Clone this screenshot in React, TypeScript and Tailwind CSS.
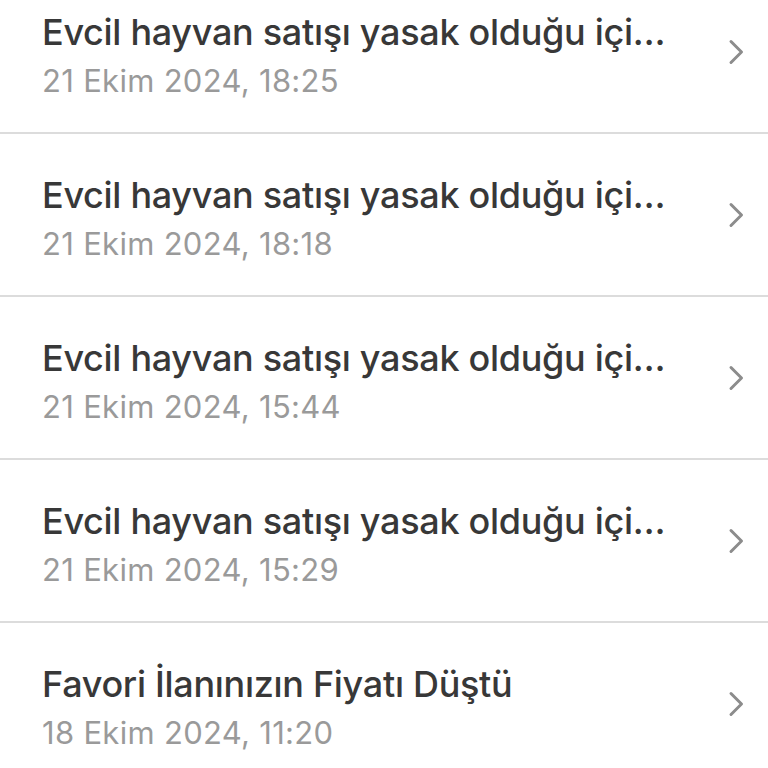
const items = [
  { title: "Evcil hayvan satışı yasak olduğu içi…", date: "21 Ekim 2024, 18:25" },
  { title: "Evcil hayvan satışı yasak olduğu içi…", date: "21 Ekim 2024, 18:18" },
  { title: "Evcil hayvan satışı yasak olduğu içi…", date: "21 Ekim 2024, 15:44" },
  { title: "Evcil hayvan satışı yasak olduğu içi…", date: "21 Ekim 2024, 15:29" },
  { title: "Favori İlanınızın Fiyatı Düştü", date: "18 Ekim 2024, 11:20" },
];

function Chevron() {
  return (
    <svg width="16" height="26" viewBox="0 0 16 26" fill="none" className="shrink-0">
      <path d="M3 2.5L13.5 13L3 23.5" stroke="#8c8c8c" strokeWidth="3" strokeLinecap="round" strokeLinejoin="round" />
    </svg>
  );
}

export default function App() {
  return (
    <div className="w-[768px] h-[768px] overflow-hidden bg-white font-['Inter',sans-serif]">
      <div className="-mt-[29px]">
        {items.map((item, i) => (
          <div key={i} className="h-[163px] flex items-center pl-[42px] pr-[24px] border-b-2 border-[#dcdcdc]">
            <div className="flex-1 min-w-0 pt-[7px]">
              <div className="text-[36px] leading-[44px] font-medium tracking-[-0.3px] text-[#383838] whitespace-nowrap">
                {item.title}
              </div>
              <div className="text-[31px] leading-[40px] tracking-[0.3px] text-[#9a9a9a] mt-[7px]">{item.date}</div>
            </div>
            <Chevron />
          </div>
        ))}
      </div>
    </div>
  );
}
